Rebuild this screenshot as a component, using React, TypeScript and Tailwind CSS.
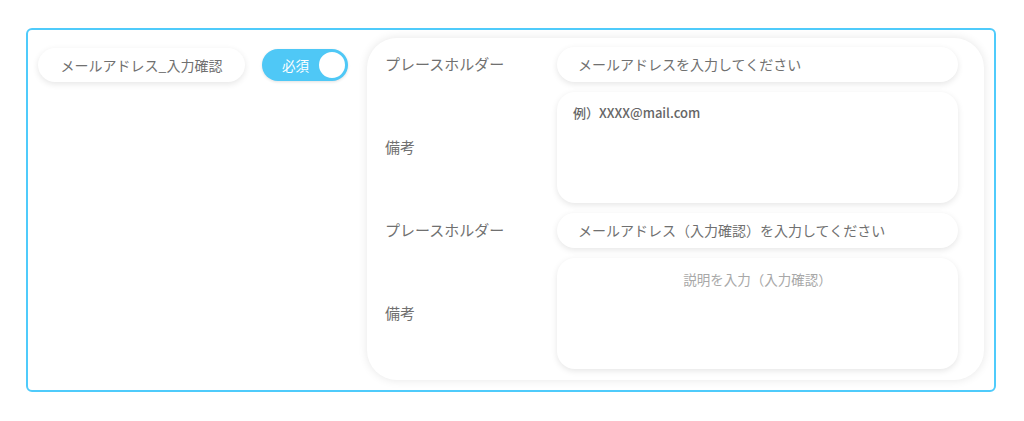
import React from "react";

const font = { fontFamily: '"Noto Sans CJK JP", "Noto Sans", sans-serif' };

function Input({ text }: { text: string }) {
  return (
    <div className="h-[35px] rounded-full bg-white shadow-[0_2px_6px_rgba(0,0,0,0.10)] flex items-center pl-[21px] text-[14px] text-[#707070]">
      {text}
    </div>
  );
}

function Area({ children, center }: { children: React.ReactNode; center?: boolean }) {
  return (
    <div
      className={
        "h-[111px] rounded-[18px] bg-white shadow-[0_2px_6px_rgba(0,0,0,0.10)] pt-[11px] " +
        (center ? "text-center text-[13.5px] text-[#a8a8a8]" : "pl-[16px] text-[13px] text-[#666] font-medium")
      }
    >
      {children}
    </div>
  );
}

export default function App() {
  return (
    <div className="w-[1024px] h-[421px] bg-white pl-[26px] pt-[28px]" style={font}>
      <div className="w-[970px] h-[364px] border-2 border-[#4fcbfb] rounded-[6px] flex items-start pt-[8px] pl-[10px] pr-[10px] pb-[10px]">
        <div className="mt-[10px] w-[207px] h-[34px] rounded-full bg-white shadow-[0_2px_6px_rgba(0,0,0,0.10)] flex items-center justify-center text-[14px] text-[#707070]">
          メールアドレス_入力確認
        </div>
        <div className="ml-[17px] mt-[11px] w-[86px] h-[32px] rounded-full bg-[#4fc8f6] flex items-center justify-between pl-[20px] pr-[1px] shadow-[0_1px_3px_rgba(0,0,0,0.12)]">
          <span className="text-white text-[13.5px]">必須</span>
          <span className="w-[30px] h-[30px] rounded-full bg-white border-2 border-[#4fc8f6]" />
        </div>
        <div className="ml-[19px] flex-1 h-[342px] rounded-[30px] bg-white shadow-[0_0_10px_rgba(0,0,0,0.10)] pl-[18px] pr-[26px] pt-[9px] pb-[11px]">
          <div className="grid grid-cols-[172px_1fr] gap-y-[10px] text-[15px] text-[#707070]">
            <div className="flex items-center">プレースホルダー</div>
            <Input text="メールアドレスを入力してください" />
            <div className="flex items-center">備考</div>
            <Area>例）XXXX@mail.com</Area>
            <div className="flex items-center">プレースホルダー</div>
            <Input text="メールアドレス（入力確認）を入力してください" />
            <div className="flex items-center">備考</div>
            <Area center>説明を入力（入力確認）</Area>
          </div>
        </div>
      </div>
    </div>
  );
}
